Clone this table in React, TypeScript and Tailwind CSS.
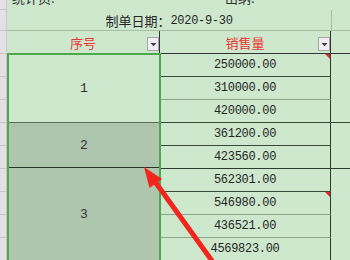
import React from "react";

const stripRows = [
  "row-start-1",
  "row-start-2",
  "row-start-3",
  "row-start-4",
  "row-start-5",
  "row-start-6",
  "row-start-7",
  "row-start-8",
  "row-start-9",
  "row-start-10",
  "row-start-11",
  "row-start-12",
];

const data = [
  { v: "250000.00", row: "row-start-4", line: "border-b-[#3a4a3a]", mark: true },
  { v: "310000.00", row: "row-start-5", line: "border-b-[#8da48d]", mark: false },
  { v: "420000.00", row: "row-start-6", line: "border-b-[#3a4a3a]", mark: false },
  { v: "361200.00", row: "row-start-7", line: "border-b-[#3a4a3a]", mark: false },
  { v: "423560.00", row: "row-start-8", line: "border-b-[#2e3a2e]", mark: false },
  { v: "562301.00", row: "row-start-9", line: "border-b-[#3a4a3a]", mark: false },
  { v: "546980.00", row: "row-start-10", line: "border-b-[#8da48d]", mark: true },
  { v: "436521.00", row: "row-start-11", line: "border-b-[#8da48d]", mark: false },
  { v: "4569823.00", row: "row-start-12", line: "border-b-[#8da48d]", mark: false },
];

function FilterButton() {
  return (
    <div className="w-[12px] h-[14px] mb-[2px] shrink-0 bg-[#f1eef1] border border-[#aaa5aa] flex items-center justify-center">
      <svg width="7" height="5" viewBox="0 0 7 5">
        <polygon points="0.5,1 6.5,1 3.5,4.2" fill="#3c3c4a" />
      </svg>
    </div>
  );
}

export default function App() {
  return (
    <div className="relative w-[350px] h-[260px] overflow-hidden bg-[#cde8cd] text-[#262626] font-['Liberation_Mono','Noto_Sans_CJK_SC',monospace]">
      <div className="grid grid-cols-[7px_153px_171px_19px] grid-rows-[10px_21px_23px_repeat(9,23px)]">
        {stripRows.map((r) => (
          <div
            key={r}
            className={`col-start-1 ${r} bg-[#e4e0e4] border-b border-r border-[#cbc5cb]`}
          />
        ))}

        {/* title row (cut off) */}
        <div className="col-start-2 col-span-3 row-start-1 flex items-start font-['Noto_Sans_CJK_SC',sans-serif] text-[13px] leading-[13px] text-[#333]">
          <span className="w-[218px] pl-[5px] -mt-[9px]">统计员:</span>
          <span className="-mt-[9px]">出纳:</span>
        </div>

        {/* date row */}
        <div className="col-start-2 col-span-2 row-start-2 border-b border-[#a6bea6] flex items-center justify-center pt-px">
          <span className="font-['Noto_Sans_CJK_SC',sans-serif] text-[13px] leading-none">制单日期：</span>
          <span className="text-[12px] tracking-[-0.3px] leading-none">2020-9-30</span>
        </div>
        <div className="col-start-4 row-start-2 border-b border-l border-[#a6bea6]" />

        {/* header row */}
        <div className="col-start-2 row-start-3 border-r border-b border-[#333] flex items-end">
          <div className="w-[12px] shrink-0" />
          <div className="flex-1 self-center text-center font-['Noto_Sans_CJK_SC',sans-serif] text-[13px] leading-none text-[#ec3535] pt-px">
            序号
          </div>
          <FilterButton />
        </div>
        <div className="col-start-3 row-start-3 border-r border-b border-[#333] flex items-end">
          <div className="w-[12px] shrink-0" />
          <div className="flex-1 self-center text-center font-['Noto_Sans_CJK_SC',sans-serif] text-[13px] leading-none text-[#ec3535] pt-px">
            销售量
          </div>
          <FilterButton />
        </div>
        <div className="col-start-4 row-start-3 border-b border-[#333]" />

        {/* values column */}
        {data.map((d) => (
          <div
            key={d.v}
            className={`col-start-3 ${d.row} relative border-r border-r-[#2e3a2e] border-b ${d.line} flex items-center justify-center text-[12px] tracking-[-0.3px] leading-none`}
          >
            {d.v}
            {d.mark && (
              <div className="absolute right-0 top-0 w-0 h-0 border-l-[5px] border-l-transparent border-t-[5px] border-t-[#e02a2a]" />
            )}
          </div>
        ))}

        {/* right merged column */}
        <div className="col-start-4 row-start-4 row-span-3 border-b border-[#3a4a3a]" />
        <div className="col-start-4 row-start-7 row-span-2 border-b border-[#2e3a2e]" />
        <div className="col-start-4 row-start-9 row-span-4 border-b border-[#3a4a3a]" />

        {/* selected merged 序号 cells */}
        <div className="col-start-2 row-start-4 row-span-9 relative z-10 -mt-px -mr-px border-2 border-b-0 border-[#4caa4c] flex flex-col text-[13px] leading-none text-[#333]">
          <div className="h-[68px] shrink-0 border-b border-[#5b6b5b] bg-[#cde8cd] flex items-center justify-center">
            1
          </div>
          <div className="h-[45px] shrink-0 border-b border-[#2a362a] bg-[#aec6ae] flex items-center justify-center">
            2
          </div>
          <div className="flex-1 bg-[#aec6ae] flex items-center justify-center">3</div>
        </div>
      </div>

      {/* red annotation arrow */}
      <svg
        className="absolute inset-0 pointer-events-none z-20"
        width="350"
        height="260"
        viewBox="0 0 350 260"
      >
        <line x1="156" y1="183" x2="215" y2="265" stroke="#f2261c" strokeWidth="5" strokeLinecap="round" />
        <polygon points="144,167 149.5,188 162,179" fill="#f2261c" />
      </svg>
    </div>
  );
}
